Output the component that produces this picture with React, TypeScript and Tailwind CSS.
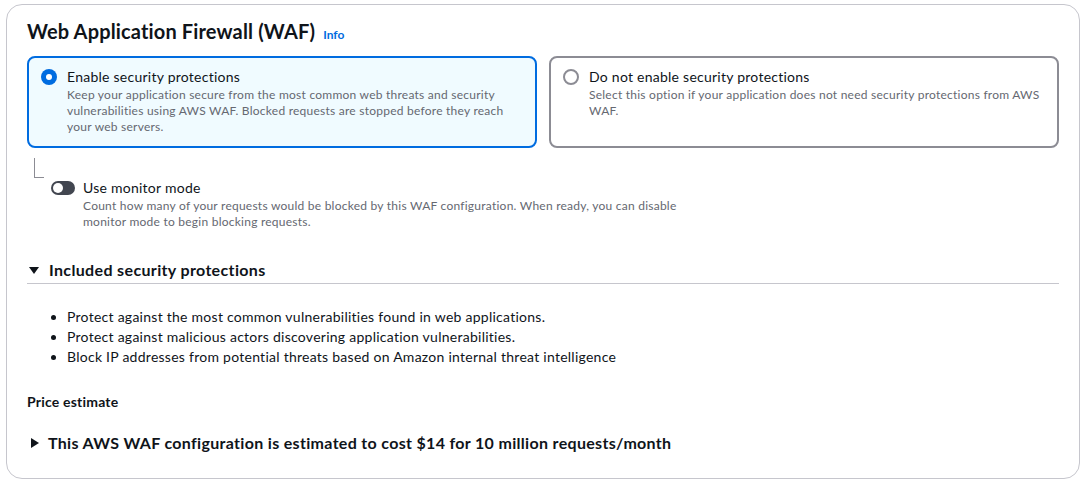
const FONT = "font-['Lato','Liberation_Sans',sans-serif]";

function Radio({ checked }: { checked: boolean }) {
  return checked ? (
    <span className="mt-[2px] flex h-4 w-4 shrink-0 items-center justify-center rounded-full bg-[#006ce0]">
      <span className="h-[6px] w-[6px] rounded-full bg-white" />
    </span>
  ) : (
    <span className="mt-[2px] h-4 w-4 shrink-0 rounded-full border-2 border-[#8c8c94] bg-white" />
  );
}

function Caret({ open }: { open: boolean }) {
  return (
    <svg width="10" height="10" viewBox="0 0 10 10" className="shrink-0">
      {open ? <polygon points="0,2 10,2 5,9" fill="#0f141a" /> : <polygon points="1,0 9,5 1,10" fill="#0f141a" />}
    </svg>
  );
}

export default function App() {
  return (
    <div className={`bg-white p-[4px_7px_10px_6px] text-[#0f141a] ${FONT}`}>
      <div className="rounded-2xl border border-[#c6c6cd] px-5 pt-[14px] pb-6">
        <h2 className="text-[20px] font-bold leading-6 tracking-[0.15px]">
          Web Application Firewall (WAF)
          <a className="ml-2 text-[12px] font-bold leading-none tracking-normal text-[#006ce0]">Info</a>
        </h2>

        <div className="mt-[13px] grid grid-cols-2 gap-3">
          <div className="flex gap-[10px] rounded-lg border-2 border-[#006ce0] bg-[#f0fbff] px-3 pt-[9px] pb-[11px]">
            <Radio checked />
            <div>
              <div className="text-[14px] leading-5 tracking-[0.25px]">Enable security protections</div>
              <div className="text-[12px] leading-4 tracking-[0.24px] text-[#656871]">
                Keep your application secure from the most common web threats and security
                <br />
                vulnerabilities using AWS WAF. Blocked requests are stopped before they reach
                <br />
                your web servers.
              </div>
            </div>
          </div>
          <div className="flex gap-[10px] rounded-lg border-2 border-[#8c8c94] bg-white px-3 pt-[9px] pb-[11px]">
            <Radio checked={false} />
            <div>
              <div className="text-[14px] leading-5 tracking-[0.25px]">Do not enable security protections</div>
              <div className="text-[12px] leading-4 tracking-[0.24px] text-[#656871]">
                Select this option if your application does not need security protections from AWS
                <br />
                WAF.
              </div>
            </div>
          </div>
        </div>

        <div className="ml-[7px] mt-[10px] h-5 w-[10px] border-b border-l border-[#8c8c94]" />
        <div className="ml-6 flex gap-2">
          <span className="mt-[3px] flex h-[14px] w-6 shrink-0 items-center rounded-full bg-[#424650] px-[2px]">
            <span className="h-[10px] w-[10px] rounded-full bg-white" />
          </span>
          <div>
            <div className="text-[14px] leading-5 tracking-[0.25px]">Use monitor mode</div>
            <div className="text-[12px] leading-4 tracking-[0.24px] text-[#656871]">
              Count how many of your requests would be blocked by this WAF configuration. When ready, you can disable
              <br />
              monitor mode to begin blocking requests.
            </div>
          </div>
        </div>

        <div className="mt-[29px] flex items-center gap-[10px] border-b border-[#c6c6cd] pb-[2px] pl-[2px] leading-[22px]">
          <Caret open />
          <span className="text-[16px] font-bold tracking-[0.35px]">Included security protections</span>
        </div>

        <ul className="mt-[23px] list-disc pl-10 text-[14px] leading-5 tracking-[0.26px]">
          <li>Protect against the most common vulnerabilities found in web applications.</li>
          <li>Protect against malicious actors discovering application vulnerabilities.</li>
          <li>Block IP addresses from potential threats based on Amazon internal threat intelligence</li>
        </ul>

        <div className="mt-[25px] text-[14px] font-bold leading-5 tracking-[0.2px]">Price estimate</div>

        <div className="mt-5 flex items-center gap-[8px] pl-[3px] leading-[22px]">
          <Caret open={false} />
          <span className="text-[16px] font-bold tracking-[0.32px]">This AWS WAF configuration is estimated to cost $14 for 10 million requests/month</span>
        </div>
      </div>
    </div>
  );
}
